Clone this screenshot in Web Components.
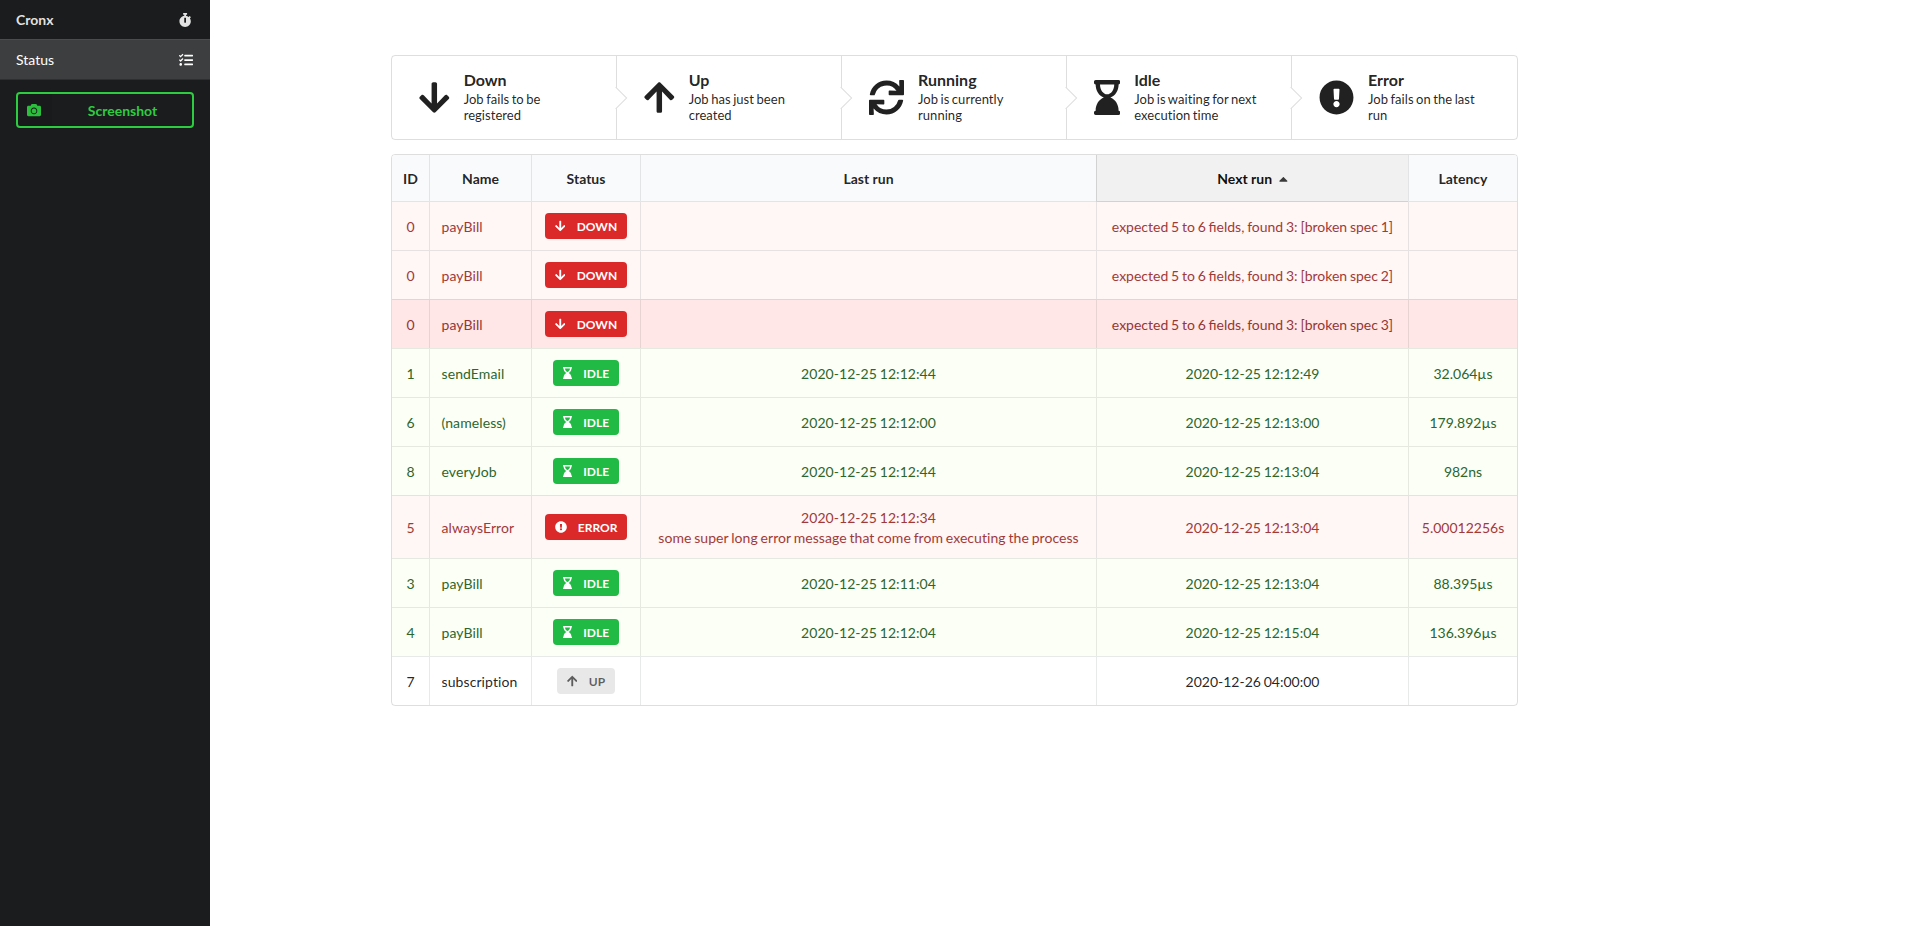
<!DOCTYPE html>
<html lang="en">
<head>
<meta charset="utf-8">
<title>Cronx</title>
<style>
html, body { margin: 0; height: 100%; background: #fff; }
body { font: 14px/1.4285 Lato, "Liberation Sans", sans-serif; color: rgba(0,0,0,.87); overflow: hidden; }
</style>
</head>
<body>
<cron-app></cron-app>
<script>
const ICONS = {
  down: [448, 'M413.1 222.5l22.2 22.2c9.4 9.4 9.4 24.6 0 33.9L241 473c-9.4 9.4-24.6 9.4-33.9 0L12.7 278.6c-9.4-9.4-9.4-24.6 0-33.9l22.2-22.2c9.5-9.5 25-9.3 34.3.4L184 343.4V56c0-13.3 10.7-24 24-24h32c13.3 0 24 10.7 24 24v287.4l114.8-120.5c9.3-9.8 24.8-10 34.3-.4z'],
  up: [448, 'M34.9 289.5l-22.2-22.2c-9.4-9.4-9.4-24.6 0-33.9L207 39c9.4-9.4 24.6-9.4 33.9 0l194.3 194.3c9.4 9.4 9.4 24.6 0 33.9L413 289.4c-9.5 9.5-25 9.3-34.3-.4L264 168.6V456c0 13.3-10.7 24-24 24h-32c-13.3 0-24-10.7-24-24V168.6L69.2 289.1c-9.3 9.8-24.8 10-34.3.4z'],
  running: [512, 'M440.65 12.57l4 82.77A247.16 247.16 0 0 0 255.83 8C134.73 8 33.91 94.92 12.29 209.82A12 12 0 0 0 24.09 224h49.05a12 12 0 0 0 11.67-9.26 175.91 175.91 0 0 1 317-56.94l-101.46-4.86a12 12 0 0 0-12.57 12v47.41a12 12 0 0 0 12 12H500a12 12 0 0 0 12-12V12a12 12 0 0 0-12-12h-47.37a12 12 0 0 0-11.98 12.57zM255.83 432a175.61 175.61 0 0 1-146-77.8l101.8 4.87a12 12 0 0 0 12.57-12v-47.4a12 12 0 0 0-12-12H12a12 12 0 0 0-12 12V500a12 12 0 0 0 12 12h47.35a12 12 0 0 0 12-12.6l-4.15-82.57A247.17 247.17 0 0 0 255.83 504c121.11 0 221.93-86.92 243.55-201.82a12 12 0 0 0-11.8-14.18h-49.05a12 12 0 0 0-11.67 9.26A175.86 175.86 0 0 1 255.83 432z'],
  idle: [384, 'M360 64c13.255 0 24-10.745 24-24V24c0-13.255-10.745-24-24-24H24C10.745 0 0 10.745 0 24v16c0 13.255 10.745 24 24 24 0 90.965 51.016 167.734 120.842 192C75.016 280.266 24 357.035 24 448c-13.255 0-24 10.745-24 24v16c0 13.255 10.745 24 24 24h336c13.255 0 24-10.745 24-24v-16c0-13.255-10.745-24-24-24 0-90.965-51.016-167.734-120.842-192C308.984 231.734 360 154.965 360 64zM192 208c-57.787 0-104-66.518-104-144h208c0 77.945-46.51 144-104 144z'],
  error: [512, 'M504 256c0 136.997-111.043 248-248 248S8 392.997 8 256C8 119.083 119.043 8 256 8s248 111.083 248 248zm-248 50c-25.405 0-46 20.595-46 46s20.595 46 46 46 46-20.595 46-46-20.595-46-46-46zm-43.673-165.346l7.418 136c.347 6.364 5.609 11.346 11.982 11.346h48.546c6.373 0 11.635-4.982 11.982-11.346l7.418-136c.375-6.874-5.098-12.654-11.982-12.654h-63.383c-6.884 0-12.356 5.78-11.981 12.654z'],
  camera: [512, 'M512 144v288c0 26.5-21.5 48-48 48H48c-26.5 0-48-21.5-48-48V144c0-26.5 21.5-48 48-48h88l12.3-32.9c7-18.7 24.9-31.1 44.9-31.1h125.5c20 0 37.9 12.4 44.9 31.1L376 96h88c26.5 0 48 21.5 48 48zM376 288c0-66.2-53.8-120-120-120s-120 53.8-120 120 53.8 120 120 120 120-53.8 120-120zm-32 0c0 48.5-39.5 88-88 88s-88-39.5-88-88 39.5-88 88-88 88 39.5 88 88z'],
  stopwatch: [448, 'M432 304c0 114.9-93.1 208-208 208S16 418.9 16 304c0-104 76.3-190.2 176-205.5V64h-28c-6.6 0-12-5.4-12-12V12c0-6.6 5.4-12 12-12h120c6.6 0 12 5.4 12 12v40c0 6.6-5.4 12-12 12h-28v34.5c37.5 5.8 71.7 21.6 99.7 44.6l27.5-27.5c4.7-4.7 12.3-4.7 17 0l28.3 28.3c4.7 4.7 4.7 12.3 0 17l-29.4 29.4-.6.6C419.7 223.3 432 262.2 432 304zm-176 36V188.5c0-6.6-5.4-12-12-12h-40c-6.6 0-12 5.4-12 12V340c0 6.6 5.4 12 12 12h40c6.6 0 12-5.4 12-12z'],
  tasks: [512, 'M139.61 35.5a12 12 0 0 0-17 0L58.93 98.81l-22.7-22.12a12 12 0 0 0-17 0L3.53 92.41a12 12 0 0 0 0 17l47.59 47.4a12.78 12.78 0 0 0 17.61 0l15.59-15.62L156.52 69a12.09 12.09 0 0 0 .09-17zm0 159.19a12 12 0 0 0-17 0l-63.68 63.72-22.7-22.1a12 12 0 0 0-17 0L3.53 252a12 12 0 0 0 0 17L51 316.5a12.77 12.77 0 0 0 17.6 0l15.7-15.69 72.2-72.22a12 12 0 0 0 .09-16.9zM64 368c-26.49 0-48.59 21.5-48.59 48S37.53 464 64 464a48 48 0 0 0 0-96zm432 16H208a16 16 0 0 0-16 16v32a16 16 0 0 0 16 16h288a16 16 0 0 0 16-16v-32a16 16 0 0 0-16-16zm0-320H208a16 16 0 0 0-16 16v32a16 16 0 0 0 16 16h288a16 16 0 0 0 16-16V80a16 16 0 0 0-16-16zm0 160H208a16 16 0 0 0-16 16v32a16 16 0 0 0 16 16h288a16 16 0 0 0 16-16v-32a16 16 0 0 0-16-16z'],
  caret: [320, 'M288.662 352H31.338c-17.818 0-26.741-21.543-14.142-34.142l128.662-128.662c7.81-7.81 20.474-7.81 28.284 0l128.662 128.662c12.6 12.599 3.676 34.142-14.142 34.142z']
};

function define(name, render) {
  customElements.define(name, class extends HTMLElement {
    connectedCallback() {
      if (this.shadowRoot) return;
      this.attachShadow({ mode: 'open' }).innerHTML = render(this);
    }
  });
}

define('cron-icon', el => {
  const [w, d] = ICONS[el.getAttribute('name')];
  return `<style>:host{display:inline-flex;flex:none;height:1em;width:${w / 512}em}svg{width:100%;height:100%;display:block;fill:currentColor}</style>
  <svg viewBox="0 0 ${w} 512"><path d="${d}"/></svg>`;
});

define('cron-menu-item', el => `<style>
  :host{display:flex;justify-content:space-between;box-sizing:border-box;height:40px;padding:0 16px;align-items:center;color:rgba(255,255,255,.88);border-bottom:1px solid #2e2f30;line-height:20px}
  :host([brand]){font-weight:700;border-bottom-color:#4b4c4d}
  :host([brand]) .i{width:17px}
  :host([active]){background:#3d3e3f;color:#fff}
  .i{width:16px;display:flex;justify-content:center}
  </style><slot></slot><span class="i"><cron-icon name="${el.getAttribute('icon')}"></cron-icon></span>`);

define('cron-button', el => `<style>
  :host{display:flex;box-sizing:border-box;height:36px;border:2px solid #2ecc40;border-radius:4px;color:#2ecc40;font-weight:700;line-height:14px;align-items:stretch}
  .i{width:34px;background:rgba(0,0,0,.05);display:flex;align-items:center;justify-content:center;opacity:.92;padding-right:2px;box-sizing:border-box}
  .t{flex:1;display:flex;align-items:center;justify-content:center;padding:2px 0 0 1px}
  </style><span class="i"><cron-icon name="${el.getAttribute('icon')}"></cron-icon></span><span class="t"><slot></slot></span>`);

define('cron-sidebar', () => `<style>
  :host{display:block;width:210px;flex:none;background:#1b1c1d}
  .b{padding:12px 16px}
  </style>
  <cron-menu-item brand icon="stopwatch">Cronx</cron-menu-item>
  <cron-menu-item active icon="tasks">Status</cron-menu-item>
  <div class="b"><cron-button icon="camera">Screenshot</cron-button></div>`);

define('cron-step', el => `<style>
  :host{display:flex;position:relative;box-sizing:border-box;align-items:center;padding:0 28px 1px 27px;border-right:1px solid rgba(34,36,38,.15)}
  :host(:last-child){border-right:0}
  :host(:last-child)::after{display:none}
  :host::after{content:"";position:absolute;z-index:2;right:-8px;top:50%;width:16px;height:16px;box-sizing:border-box;background:#fff;border:solid rgba(34,36,38,.15);border-width:0 1px 1px 0;transform:translateY(-50%) rotate(-45deg)}
  cron-icon{font-size:35px;margin-right:14px}
  .t{font-weight:700;font-size:16px;line-height:18px}
  .d{font-size:13px;line-height:16px;margin-top:2px;word-spacing:-.9px;letter-spacing:.05px}
  </style><cron-icon name="${el.getAttribute('icon')}"></cron-icon>
  <div><div class="t">${el.getAttribute('label')}</div><div class="d"><slot></slot></div></div>`);

define('cron-steps', () => `<style>
  :host{display:grid;grid-template-columns:repeat(5,225px);box-sizing:border-box;width:1127px;height:85px;border:1px solid rgba(34,36,38,.15);border-radius:4px}
  </style>
  <cron-step icon="down" label="Down">Job fails to be registered</cron-step>
  <cron-step icon="up" label="Up">Job has just been created</cron-step>
  <cron-step icon="running" label="Running">Job is currently running</cron-step>
  <cron-step icon="idle" label="Idle">Job is waiting for next execution time</cron-step>
  <cron-step icon="error" label="Error">Job fails on the last run</cron-step>`);

define('cron-label', el => `<style>
  :host{display:inline-flex;box-sizing:border-box;height:26px;align-items:center;padding:0 10px;border-radius:4px;background:#db2828;color:#fff;font-size:12px;font-weight:700;line-height:12px;text-transform:uppercase}
  :host([kind=idle]){background:#21ba45}
  :host([kind=up]){background:#e8e8e8;color:rgba(0,0,0,.6)}
  cron-icon{margin-right:11.3px}
  span{padding-top:2px}
  </style><cron-icon name="${el.getAttribute('kind')}"></cron-icon><span>${el.getAttribute('kind')}</span>`);

define('cron-row', el => {
  const [id, name, kind, last, next, latency] = el.dataset.cells.split('|');
  return `<style>
  :host{display:grid;grid-template-columns:var(--cols);box-sizing:border-box;height:49px;border-top:1px solid rgba(34,36,38,.1)}
  :host([first]){border-top:0;height:48px}
  :host([tall]){height:63px}
  :host([tone=bad]){background:#fff6f6;color:#9f3a38}
  :host([tone=hover]){background:#ffe7e7;color:#943634}
  :host([tone=good]){background:#fcfff5;color:#2c662d}
  div{box-sizing:border-box;display:flex;align-items:center;justify-content:center;text-align:center;border-left:1px solid rgba(34,36,38,.1);line-height:20px;white-space:pre-line;padding-top:2px;word-spacing:-.8px}
  div:first-of-type{border-left:0}
  .l{padding-top:0}
  .n{justify-content:flex-start;padding-left:11.5px;letter-spacing:.09px}
  .m{letter-spacing:.05px}
  </style><div>${id}</div><div class="n">${name}</div><div class="l"><cron-label kind="${kind}"></cron-label></div><div class="m">${last}</div><div>${next}</div><div>${latency}</div>`;
});

const ROWS = [
  ['bad', '0|payBill|down||expected 5 to 6 fields, found 3: [broken spec 1]|', 'first'],
  ['bad', '0|payBill|down||expected 5 to 6 fields, found 3: [broken spec 2]|'],
  ['hover', '0|payBill|down||expected 5 to 6 fields, found 3: [broken spec 3]|'],
  ['good', '1|sendEmail|idle|2020-12-25 12:12:44|2020-12-25 12:12:49|32.064µs'],
  ['good', '6|(nameless)|idle|2020-12-25 12:12:00|2020-12-25 12:13:00|179.892µs'],
  ['good', '8|everyJob|idle|2020-12-25 12:12:44|2020-12-25 12:13:04|982ns'],
  ['bad', '5|alwaysError|error|2020-12-25 12:12:34\nsome super long error message that come from executing the process|2020-12-25 12:13:04|5.00012256s', 'tall'],
  ['good', '3|payBill|idle|2020-12-25 12:11:04|2020-12-25 12:13:04|88.395µs'],
  ['good', '4|payBill|idle|2020-12-25 12:12:04|2020-12-25 12:15:04|136.396µs'],
  ['', '7|subscription|up||2020-12-26 04:00:00|']
];

define('cron-table', () => `<style>
  :host{--cols:37px 102px 109px 456px 312px 109px;display:block;box-sizing:border-box;width:1127px;border:1px solid rgba(34,36,38,.15);border-radius:4px;overflow:hidden}
  header{display:grid;grid-template-columns:var(--cols);height:47px;font-weight:700;line-height:20px}
  header div{box-sizing:border-box;display:flex;align-items:center;justify-content:center;background:#f9fafb;border-left:1px solid rgba(34,36,38,.1);border-bottom:1px solid rgba(34,36,38,.1);padding-top:1px}
  header div:first-child{border-left:0}
  header .s{background:#f1f1f1;color:rgba(0,0,0,.95);border-color:rgba(34,36,38,.15)}
  cron-icon{margin-left:7px;opacity:.8}
  </style>
  <header><div>ID</div><div>Name</div><div>Status</div><div>Last run</div><div class="s">Next run<cron-icon name="caret"></cron-icon></div><div>Latency</div></header>
  ${ROWS.map(([tone, cells, flag = '']) => `<cron-row tone="${tone}" ${flag} data-cells="${cells}"></cron-row>`).join('')}`);

define('cron-app', () => `<style>
  :host{display:flex;height:100vh}
  main{flex:1;padding:55px 0 0 181px;display:flex;flex-direction:column;gap:14px}
  </style><cron-sidebar></cron-sidebar><main><cron-steps></cron-steps><cron-table></cron-table></main>`);
</script>
</body>
</html>
